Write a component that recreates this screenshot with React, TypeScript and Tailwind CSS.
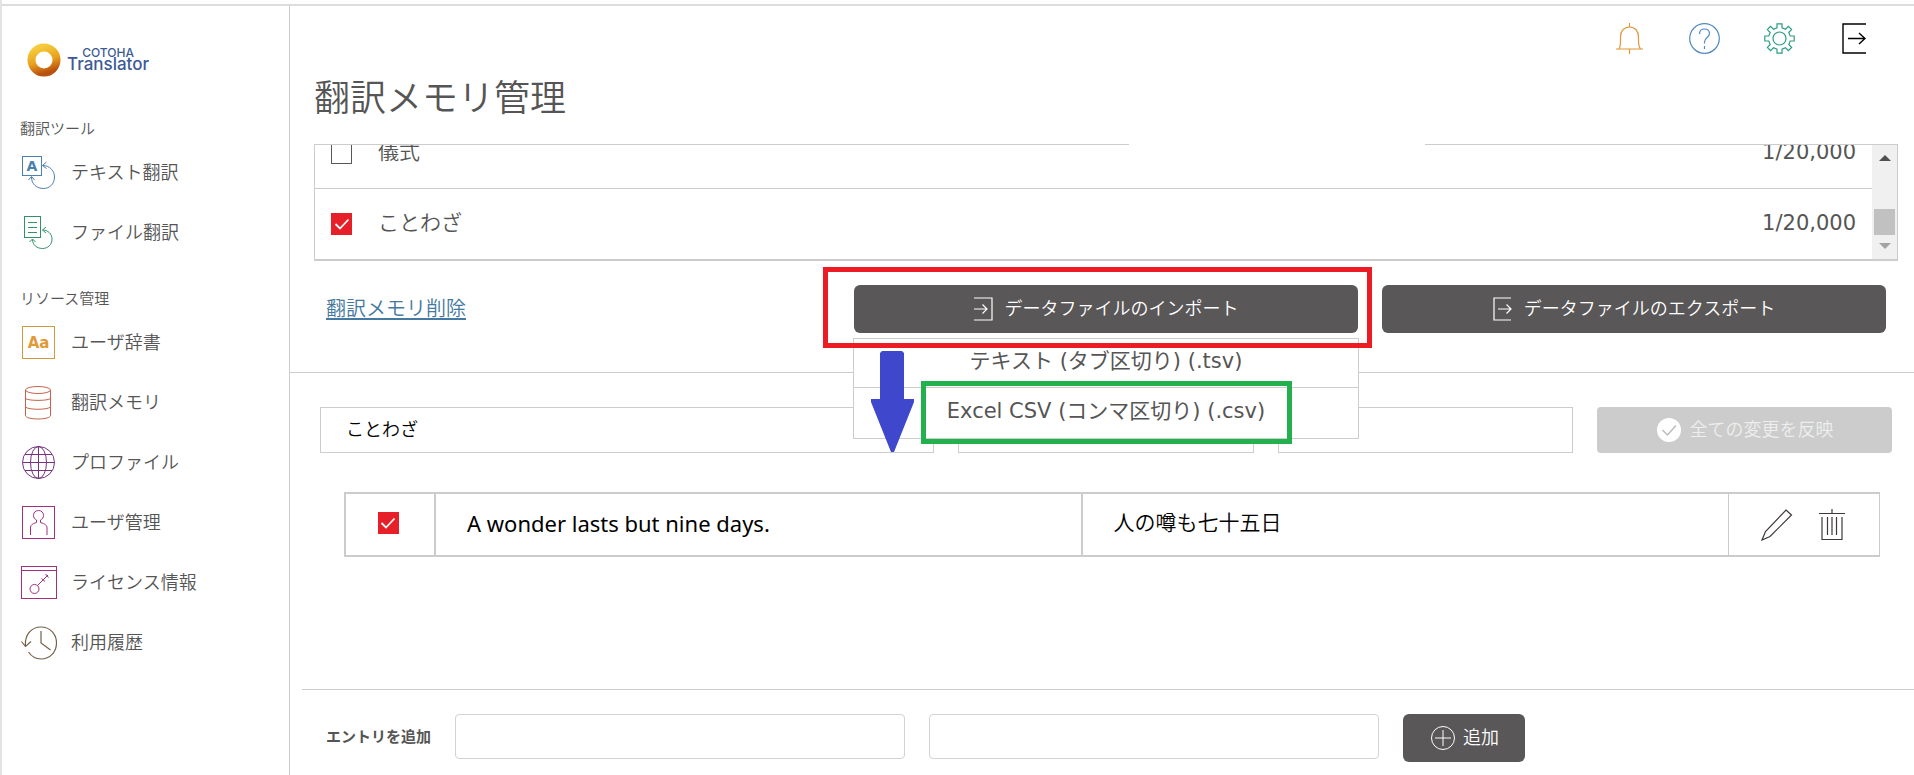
import clsx from 'clsx';
import type { ReactNode } from 'react';

interface NavItem {
  label: string;
  icon: ReactNode;
}

const toolItems: NavItem[] = [
  { label: 'テキスト翻訳', icon: <TextIcon /> },
  { label: 'ファイル翻訳', icon: <FileIcon /> },
];

const resourceItems: NavItem[] = [
  { label: 'ユーザ辞書', icon: <DictionaryIcon /> },
  { label: '翻訳メモリ', icon: <MemoryIcon /> },
  { label: 'プロファイル', icon: <ProfileIcon /> },
  { label: 'ユーザ管理', icon: <UserIcon /> },
  { label: 'ライセンス情報', icon: <LicenseIcon /> },
  { label: '利用履歴', icon: <HistoryIcon /> },
];

const memories = [
  { name: '儀式', count: '1/20,000', checked: false },
  { name: 'ことわざ', count: '1/20,000', checked: true },
];

/* ---------- icons ---------- */

function TextIcon() {
  return (
    <svg width="34" height="34" viewBox="0 0 34 34" fill="none" stroke="#4a7fb0">
      <rect x="0.5" y="0.5" width="19" height="19" />
      <text x="10" y="15" textAnchor="middle" fontSize="14" fontWeight="700" fill="#4a7fb0" stroke="none">
        A
      </text>
      <path d="M20.5 9.5C28 9.5 32.5 15 32.5 21C32.5 28 27.5 32.5 21.5 32.5C14.5 32.5 9.500 28 9.500 21" />
      <path d="M24.500 6L20.500 9.500L24.500 12.500M6.500 24L9.500 20.500L12.500 24" />
    </svg>
  );
}

function FileIcon() {
  return (
    <svg width="34" height="34" viewBox="0 0 34 34" fill="none" stroke="#2f9268">
      <rect x="2.5" y="0.5" width="16" height="21" />
      <path d="M6 6.500H15M6 11.500H15M6 16.500H15" />
      <path d="M20.500 14C26 14 30 18 30 23C30 28.500 26 32.500 20.500 32.500C15 32.500 10.500 29 10.500 23.500" />
      <path d="M24 11L20.500 14L24 17M7.500 26L10.500 23L13.500 26" />
    </svg>
  );
}

function DictionaryIcon() {
  return (
    <svg width="34" height="34" viewBox="0 0 34 34" fill="none" stroke="#cf9a3c">
      <rect x="0.5" y="0.5" width="32" height="32" />
      <text x="16.5" y="22" textAnchor="middle" fontSize="15" fontWeight="700" fill="#e09a38" stroke="none">
        Aa
      </text>
    </svg>
  );
}

function MemoryIcon() {
  return (
    <svg width="34" height="34" viewBox="0 0 34 34" fill="none" stroke="#c4634a">
      <ellipse cx="16" cy="4" rx="12.500" ry="3.500" />
      <path d="M3.500 4V29.500C3.500 31.500 9 33 16 33C23 33 28.500 31.500 28.500 29.500V4" />
      <path d="M3.500 12.500C6 15 26 15 28.500 12.500M3.500 21C6 24 26 24 28.500 21" />
    </svg>
  );
}

function ProfileIcon() {
  return (
    <svg width="34" height="34" viewBox="0 0 34 34" fill="none" stroke="#773180">
      <circle cx="16.5" cy="16.5" r="16" />
      <ellipse cx="16.5" cy="16.5" rx="8" ry="16" />
      <path d="M16.500 0.500V32.500M0.500 16.500H32.500M3 8.500H30M3 24.500H30" />
    </svg>
  );
}

function UserIcon() {
  return (
    <svg width="34" height="34" viewBox="0 0 34 34" fill="none" stroke="#a0307f">
      <rect x="0.5" y="0.5" width="32" height="32" />
      <path d="M8.500 29V22C8.500 19 10 18 14.500 16.500V14C12.500 13 11.500 11.500 11.500 9.500C11.500 6.500 13.500 4.500 16.500 4.500C19.500 4.500 21.500 6.500 21.500 9.500C21.500 11.500 20.500 13 18.500 14V16.500C23 18 25 19 25 22V29" />
    </svg>
  );
}

function LicenseIcon() {
  return (
    <svg width="36" height="34" viewBox="0 0 36 34" fill="none" stroke="#a0307f">
      <rect x="0.5" y="0.5" width="35" height="32" />
      <path d="M0.500 4.500H35.500" />
      <circle cx="13.500" cy="23" r="4.500" />
      <path d="M16.500 19.500L27 9M24.500 8L27.500 11.500M20.500 12.500L24 15.500" />
    </svg>
  );
}

function HistoryIcon() {
  return (
    <svg width="36" height="34" viewBox="0 0 36 34" fill="none" stroke="#756048" strokeWidth="1.200">
      <path d="M4.500 20.500C3.500 9 10 1 20 1C29 1 35.500 8 35.500 17C35.500 26 29 33 20 33C15 33 10.500 30.500 7.500 26" />
      <path d="M0.500 15.500L4.500 20.500L10 15.500M20 5V17L29.500 24" />
    </svg>
  );
}

function BellIcon() {
  return (
    <svg width="28" height="31" viewBox="0 0 28 31" fill="none" stroke="#e0983a" strokeWidth="1.200">
      <path d="M0 26H27M13.500 0V4M13.500 26V31" />
      <path d="M3 26C5 23 4.500 18 4.500 14C4.500 8 8 4 13.500 4C19 4 22.500 8 22.500 14C22.500 18 22 23 24.500 26" />
    </svg>
  );
}

function HelpIcon() {
  return (
    <svg width="31" height="31" viewBox="0 0 31 31" fill="none" stroke="#5089bd" strokeWidth="1.200">
      <circle cx="15.500" cy="15.500" r="14.800" />
      <path d="M10.500 11C10.500 8 12.500 6 15.500 6C18.500 6 20.500 8 20.500 10.500C20.500 14.500 15.500 14.500 15.500 19V20.500M15.500 23V26" />
    </svg>
  );
}

function GearIcon() {
  return (
    <svg width="31" height="31" viewBox="0 0 31 31" fill="none" stroke="#2a9d80" strokeWidth="1.200">
      <circle cx="15.500" cy="15.500" r="6.500" />
      <path d="M13 0.800H18V4.800L21.500 6.200L24.400 3.400L27.600 6.600L24.800 9.500L26.200 13H30.200V18H26.200L24.800 21.500L27.600 24.400L24.400 27.600L21.500 24.800L18 26.200V30.200H13V26.200L9.500 24.800L6.600 27.600L3.400 24.400L6.200 21.500L4.800 18H0.800V13H4.800L6.200 9.500L3.400 6.600L6.600 3.400L9.500 6.200L13 4.800Z" />
    </svg>
  );
}

function LogoutIcon() {
  return (
    <svg width="24" height="31" viewBox="0 0 24 31" fill="none" stroke="#000" strokeWidth="1.400">
      <path d="M24 1H1V30H24M6 15.500H23M17 10L23 15.500L17 21" />
    </svg>
  );
}

function ImportIcon() {
  return (
    <svg width="19" height="24" viewBox="0 0 19 24" fill="none" stroke="currentColor" strokeWidth="1.200">
      <path d="M0 1H18V23H0M0 12H13M8.500 7.500L13 12L8.500 16.500" />
    </svg>
  );
}

function ExportIcon() {
  return (
    <svg width="19" height="24" viewBox="0 0 19 24" fill="none" stroke="currentColor" strokeWidth="1.200">
      <path d="M18 1H1V23H18M5 12H18M13.500 7.500L18 12L13.500 16.500" />
    </svg>
  );
}

function PencilIcon() {
  return (
    <svg width="32" height="32" viewBox="0 0 32 32" fill="none" stroke="#3e3a39" strokeWidth="1.200">
      <path d="M25 1L30.500 6L9 27.500L1 31L4.500 22.500Z" />
    </svg>
  );
}

function TrashIcon() {
  return (
    <svg width="26" height="32" viewBox="0 0 26 32" fill="none" stroke="#3e3a39" strokeWidth="1.200">
      <path d="M0 4.500H26M13 0V4.500M3 8V30.500H23V8M8.500 8V26M13 8V26M17.500 8V26" />
    </svg>
  );
}

/* ---------- parts ---------- */

function Checkbox({ label, checked }: { label: string; checked: boolean }) {
  return (
    <span className="inline-grid place-items-center align-middle">
      <input
        type="checkbox"
        aria-label={label}
        defaultChecked={checked}
        className="peer col-start-1 row-start-1 h-[22px] w-[21px] appearance-none border border-[#595757] bg-white checked:border-[#e61f28] checked:bg-[#e61f28]"
      />
      <svg
        className="pointer-events-none invisible col-start-1 row-start-1 peer-checked:visible"
        width="16"
        height="12"
        viewBox="0 0 16 12"
        fill="none"
        stroke="#fff"
        strokeWidth="1.800"
      >
        <path d="M1.500 6L6 10.500L14.500 1.500" />
      </svg>
    </span>
  );
}

function NavGroup({ title, items, className }: { title: string; items: NavItem[]; className?: string }) {
  return (
    <section className={className}>
      <h2 className="mb-1 pl-[18px] text-[15px] leading-5 font-[350]">{title}</h2>
      <ul>
        {items.map((item) => (
          <li key={item.label}>
            <a href="#" className="flex h-[60px] items-center text-lg">
              <span className="flex w-[69px] shrink-0 justify-center pl-1">{item.icon}</span>
              {item.label}
            </a>
          </li>
        ))}
      </ul>
    </section>
  );
}

function Sidebar() {
  return (
    <aside className="w-[288px] shrink-0 border-r border-[#ccc] pt-[37px]">
      <div className="mb-[42px] flex items-center gap-[6px] pl-[25px] font-['Inter',sans-serif] font-medium text-[#3d5a94]">
        <svg width="34" height="34" viewBox="0 0 34 34" fill="none">
          <defs>
            <linearGradient id="ring" x1="0.300" y1="0" x2="0.600" y2="1">
              <stop offset="0" stopColor="#f5cb3c" />
              <stop offset="0.550" stopColor="#e9a01d" />
              <stop offset="1" stopColor="#b9500f" />
            </linearGradient>
          </defs>
          <circle cx="17" cy="17" r="12.500" stroke="url(#ring)" strokeWidth="8" />
        </svg>
        <div className="flex flex-col items-center pb-0.5">
          <span className="text-xs leading-[11px]">COTOHA</span>
          <span className="text-[17px] leading-[13px]">Translator</span>
        </div>
      </div>
      <nav>
        <NavGroup title="翻訳ツール" items={toolItems} />
        <NavGroup title="リソース管理" items={resourceItems} className="mt-[26px]" />
      </nav>
    </aside>
  );
}

function MemoryList() {
  return (
    <div className="relative mt-[27px] mr-4 ml-6 flex border border-b-2 border-[#ccc]">
      <div className="absolute -top-px left-[814px] h-px w-[296px] bg-white" />
      <ul className="flex h-[114px] flex-1 flex-col justify-end overflow-hidden text-[21px]">
        {memories.map((memory, i) => (
          <li
            key={memory.name}
            className={clsx('flex h-[70px] shrink-0 items-center px-4', i > 0 && 'box-content border-t border-[#ccc]')}
          >
            <Checkbox label={memory.name} checked={memory.checked} />
            <span className="ml-[26px] flex-1">{memory.name}</span>
            <span className="font-normal">{memory.count}</span>
          </li>
        ))}
      </ul>
      <div className="flex w-[25px] flex-col items-center bg-[#f0f0f0] pt-2.5 pb-2.5">
        <svg width="12" height="6" viewBox="0 0 12 6" fill="#505050">
          <path d="M6 0L12 6H0Z" />
        </svg>
        <div className="mt-auto mb-2 h-[26px] w-[21px] bg-[#c1c1c1]" />
        <svg width="12" height="6" viewBox="0 0 12 6" fill="#a3a3a3">
          <path d="M0 0H12L6 6Z" />
        </svg>
      </div>
    </div>
  );
}

function ImportMenu() {
  return (
    <div className="relative flex-1">
      <button className="flex h-12 w-full items-center justify-center gap-3 rounded-md bg-[#595757] text-lg text-white">
        <ImportIcon />
        データファイルのインポート
      </button>
      <ul className="absolute -inset-x-px top-[53px] z-10 border border-[#ccc] bg-white text-[21px] font-normal">
        <li className="border-b border-[#ccc]">
          <button className="block h-12 w-full pb-0.5">テキスト (タブ区切り) (.tsv)</button>
        </li>
        <li>
          <button className="block h-[50px] w-full pb-0.5">Excel CSV (コンマ区切り) (.csv)</button>
        </li>
      </ul>

      {/* guide marks */}
      <div className="pointer-events-none absolute -top-[18px] -right-[14px] -left-[31px] z-20 h-[81px] border-[5px] border-[#ed1c24]" />
      <div className="pointer-events-none absolute top-[96px] left-[67px] z-20 h-[63px] w-[371px] border-[5px] border-[#22b14c]" />
      <svg
        className="pointer-events-none absolute top-[66px] left-[17px] z-20"
        width="43"
        height="101"
        viewBox="0 0 43 101"
        fill="#3f48cc"
      >
        <path d="M11 0H31L33 2V48H43V51L23 101H20L0 51V48H9V2Z" />
      </svg>
    </div>
  );
}

export default function App() {
  return (
    <div className="flex min-h-screen flex-col border-l-2 border-[#e3e3e3] bg-white pt-1 font-['DejaVu_Sans','Noto_Sans_CJK_JP',sans-serif] font-[350] text-[#555]">
      <div className="flex flex-1 border-t-2 border-[#dcdcdc]">
        <Sidebar />

        <main className="flex min-w-0 flex-1 flex-col">
          <header className="flex items-center justify-end pt-[17px] pr-12 text-black">
            <button aria-label="お知らせ" className="mr-[45px]">
              <BellIcon />
            </button>
            <button aria-label="ヘルプ" className="mr-11">
              <HelpIcon />
            </button>
            <button aria-label="設定" className="mr-[47px]">
              <GearIcon />
            </button>
            <button aria-label="ログアウト">
              <LogoutIcon />
            </button>
          </header>

          <h1 className="mt-[27px] pl-6 text-4xl leading-9 font-[350]">翻訳メモリ管理</h1>

          <MemoryList />

          <div className="flex items-center justify-between border-b border-[#ccc] pt-6 pr-7 pb-[39px] pl-9">
            <a href="#" className="text-xl text-[#46799f] underline underline-offset-2">
              翻訳メモリ削除
            </a>
            <div className="flex w-[1032px] gap-6">
              <ImportMenu />
              <button className="flex h-12 flex-1 items-center justify-center gap-3 rounded-md bg-[#595757] text-lg text-white">
                <ExportIcon />
                データファイルのエクスポート
              </button>
            </div>
          </div>

          <div className="grid grid-cols-[614fr_295fr_295fr_295fr] gap-6 pt-[34px] pr-[22px] pl-[30px]">
            <input
              aria-label="翻訳メモリ名"
              defaultValue="ことわざ"
              className="h-[46px] min-w-0 border border-[#ccc] px-[25px] pb-1 text-lg text-black"
            />
            <input aria-label="原文" className="h-[46px] min-w-0 border border-[#ccc] px-6 text-lg" />
            <input aria-label="訳文" className="h-[46px] min-w-0 border border-[#ccc] px-6 text-lg" />
            <button
              disabled
              className="flex h-[46px] items-center justify-center gap-2 rounded bg-[#ccc] pl-0.5 text-lg text-[#eee]"
            >
              <svg width="24" height="24" viewBox="0 0 24 24" fill="none">
                <circle cx="12" cy="12" r="12" fill="#fff" />
                <path d="M5.500 12L10.500 17L19 7.500" stroke="#bbb" strokeWidth="1.500" />
              </svg>
              全ての変更を反映
            </button>
          </div>

          <div className="mt-[39px] pr-[34px] pb-6 pl-[54px]">
            <table className="w-full table-fixed border-separate border-spacing-0 border-y-2 border-r border-l-2 border-[#ccc] text-black">
              <colgroup>
                <col className="w-[90px]" />
                <col />
                <col />
                <col className="w-[150px]" />
              </colgroup>
              <tbody>
                <tr className="h-[61px]">
                  <td className="border-r-2 border-[#ccc] pr-1 pb-1 text-center">
                    <Checkbox label="エントリを選択" checked />
                  </td>
                  <td className="border-r-2 border-[#ccc] px-[31px] pb-0.5 font-['Noto_Sans',sans-serif] text-[22px] font-normal">
                    A wonder lasts but nine days.
                  </td>
                  <td className="border-r border-[#ccc] px-[31px] pb-0.5 text-[21px]">人の噂も七十五日</td>
                  <td>
                    <div className="flex items-center justify-center gap-[26px] pr-0.5">
                      <button aria-label="編集">
                        <PencilIcon />
                      </button>
                      <button aria-label="削除">
                        <TrashIcon />
                      </button>
                    </div>
                  </td>
                </tr>
              </tbody>
            </table>
          </div>

          <form className="mt-auto ml-3 flex items-start border-t border-[#ccc] pt-6 pb-[13px] pl-6">
            <label htmlFor="entry-source" className="mr-6 text-[15px] leading-[46px] font-bold">
              エントリを追加
            </label>
            <input id="entry-source" className="mr-6 h-[45px] w-[450px] rounded-sm border border-[#d3d3d3] px-4 text-lg" />
            <input
              aria-label="訳文を追加"
              className="mr-6 h-[45px] w-[450px] rounded-sm border border-[#d3d3d3] px-4 text-lg"
            />
            <button
              type="button"
              className="flex h-12 w-[122px] items-center justify-center gap-2 rounded-md bg-[#595757] pl-0.5 text-lg text-white"
            >
              <svg width="24" height="24" viewBox="0 0 24 24" fill="none" stroke="currentColor">
                <circle cx="12" cy="12" r="11.500" />
                <path d="M12 4V20M4 12H20" />
              </svg>
              追加
            </button>
          </form>
        </main>
      </div>
    </div>
  );
}
